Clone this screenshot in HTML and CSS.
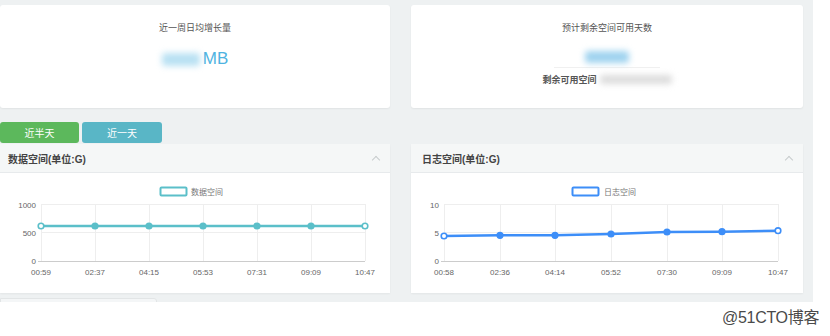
FILE: index.html
```html
<!DOCTYPE html>
<html lang="zh-CN">
  <head>
    <meta charset="UTF-8" />
    <title>空间监控</title>
    <link rel="stylesheet" href="styles.css">
  </head>
  <body>
    <div class="page">
      <div class="stats">
        <div class="stat-card">
          <div class="stat-title">近一周日均增长量</div>
          <div class="stat-value"><span class="blur blur-blue blur-num"></span>MB</div>
        </div>
        <div class="stat-card">
          <div class="stat-title">预计剩余空间可用天数</div>
          <div class="stat-value stat-days"><span class="blur blur-blue blur-days"></span></div>
          <div class="stat-sub">剩余可用空间 <span class="blur blur-gray"></span></div>
        </div>
      </div>

      <div class="tabs">
        <button class="btn btn-green">近半天</button>
        <button class="btn btn-teal">近一天</button>
      </div>

      <div class="panels">
        <div class="panel">
          <div class="panel-head">
            <span>数据空间(单位:G)</span>
            <span class="chevron"></span>
          </div>
          <div class="panel-body">
            <svg width="390" height="120" viewBox="0 0 390 120">
              <rect x="160.5" y="14.5" width="26" height="8" rx="1" fill="#fff" stroke="#5bbfc9" stroke-width="2"/>
              <text x="191" y="22" class="legend">数据空间</text>
              <g stroke="#eeeeee" stroke-width="1">
                <line x1="41" y1="31.5" x2="365" y2="31.5"/>
                <line x1="41" y1="59.5" x2="365" y2="59.5"/>
                <line x1="41.5" y1="31" x2="41.5" y2="88"/>
                <line x1="95.5" y1="31" x2="95.5" y2="88"/>
                <line x1="149.5" y1="31" x2="149.5" y2="88"/>
                <line x1="203.5" y1="31" x2="203.5" y2="88"/>
                <line x1="257.5" y1="31" x2="257.5" y2="88"/>
                <line x1="311.5" y1="31" x2="311.5" y2="88"/>
                <line x1="365.5" y1="31" x2="365.5" y2="88"/>
              </g>
              <line x1="38" y1="88.5" x2="365" y2="88.5" stroke="#cccccc"/>
              <g class="axis" text-anchor="end">
                <text x="36" y="35">1000</text>
                <text x="36" y="63">500</text>
                <text x="36" y="91">0</text>
              </g>
              <g class="axis" text-anchor="middle">
                <text x="41" y="102">00:59</text>
                <text x="95" y="102">02:37</text>
                <text x="149" y="102">04:15</text>
                <text x="203" y="102">05:53</text>
                <text x="257" y="102">07:31</text>
                <text x="311" y="102">09:09</text>
                <text x="365" y="102">10:47</text>
              </g>
              <polyline points="41,53 95,53 149,53 203,53 257,53 311,53 365,53" fill="none" stroke="#5bbfc9" stroke-width="2.4"/>
              <g fill="#5bbfc9" stroke="#5bbfc9" stroke-width="1.6">
                <circle cx="41" cy="53" r="2.8" fill="#fff"/>
                <circle cx="95" cy="53" r="2.8"/>
                <circle cx="149" cy="53" r="2.8"/>
                <circle cx="203" cy="53" r="2.8"/>
                <circle cx="257" cy="53" r="2.8"/>
                <circle cx="311" cy="53" r="2.8"/>
                <circle cx="365" cy="53" r="2.8" fill="#fff"/>
              </g>
            </svg>
          </div>
        </div>

        <div class="panel">
          <div class="panel-head">
            <span>日志空间(单位:G)</span>
            <span class="chevron"></span>
          </div>
          <div class="panel-body">
            <svg width="392" height="120" viewBox="0 0 392 120">
              <rect x="161.5" y="14.5" width="26" height="8" rx="1" fill="#fff" stroke="#3d8ef8" stroke-width="2"/>
              <text x="193" y="22" class="legend">日志空间</text>
              <g stroke="#eeeeee" stroke-width="1">
                <line x1="33" y1="31.5" x2="367" y2="31.5"/>
                <line x1="33" y1="59.5" x2="367" y2="59.5"/>
                <line x1="33.5" y1="31" x2="33.5" y2="88"/>
                <line x1="89.5" y1="31" x2="89.5" y2="88"/>
                <line x1="144.5" y1="31" x2="144.5" y2="88"/>
                <line x1="200.5" y1="31" x2="200.5" y2="88"/>
                <line x1="256.5" y1="31" x2="256.5" y2="88"/>
                <line x1="311.5" y1="31" x2="311.5" y2="88"/>
                <line x1="367.5" y1="31" x2="367.5" y2="88"/>
              </g>
              <line x1="30" y1="88.5" x2="367" y2="88.5" stroke="#cccccc"/>
              <g class="axis" text-anchor="end">
                <text x="28" y="35">10</text>
                <text x="28" y="63">5</text>
                <text x="28" y="91">0</text>
              </g>
              <g class="axis" text-anchor="middle">
                <text x="33" y="102">00:58</text>
                <text x="89" y="102">02:36</text>
                <text x="144" y="102">04:14</text>
                <text x="200" y="102">05:52</text>
                <text x="256" y="102">07:30</text>
                <text x="311" y="102">09:09</text>
                <text x="367" y="102">10:47</text>
              </g>
              <polyline points="33,63 89,62.3 144,62.3 200,61 256,59 311,58.7 367,57.7" fill="none" stroke="#3d8ef8" stroke-width="2.4"/>
              <g fill="#3d8ef8" stroke="#3d8ef8" stroke-width="1.6">
                <circle cx="33" cy="63" r="2.8" fill="#fff"/>
                <circle cx="89" cy="62.3" r="2.8"/>
                <circle cx="144" cy="62.3" r="2.8"/>
                <circle cx="200" cy="61" r="2.8"/>
                <circle cx="256" cy="59" r="2.8"/>
                <circle cx="311" cy="58.7" r="2.8"/>
                <circle cx="367" cy="57.7" r="2.8" fill="#fff"/>
              </g>
            </svg>
          </div>
        </div>
      </div>

      <div class="next-card"></div>
    </div>

    <div class="watermark">@51CTO博客</div>
  </body>
</html>
```

FILE: styles.css
```css
body {
  margin: 0;
  background: #fff;
  font-family: "Liberation Sans", "Noto Sans CJK SC", sans-serif;
  color: #555;
}
.page {
  width: 813px;
  height: 302px;
  box-sizing: border-box;
  padding-top: 5px;
  background: #eef1f2;
  overflow: hidden;
}
.stats,
.panels {
  display: grid;
  grid-template-columns: 390px 392px;
  column-gap: 21px;
}
.stat-card {
  height: 103px;
  background: #fff;
  border-radius: 3px;
  box-shadow: 0 1px 2px rgba(0, 0, 0, 0.06);
  text-align: center;
  box-sizing: border-box;
  padding-top: 17px;
}
.stat-title {
  font-size: 9px;
  line-height: 12px;
  color: #555;
}
.stat-value {
  margin-top: 14px;
  height: 22px;
  font-size: 17px;
  line-height: 22px;
  color: #4fb3e1;
}
.stat-days {
  margin-top: 11px;
  width: 106px;
  margin-left: auto;
  margin-right: auto;
  border-bottom: 1px solid #f0f0f0;
}
.stat-sub {
  margin-top: 5px;
  font-size: 9px;
  font-weight: bold;
  color: #555;
  white-space: nowrap;
  display: flex;
  justify-content: center;
  align-items: center;
  gap: 3px;
}
.blur {
  display: inline-block;
  vertical-align: middle;
  filter: blur(3px);
  border-radius: 3px;
  flex-shrink: 0;
}
.blur-blue {
  background: #b9e1f3;
}
.blur-num {
  width: 38px;
  height: 13px;
  margin-right: 3px;
}
.blur-days {
  width: 44px;
  height: 12px;
  background: #9fd3ef;
}
.blur-gray {
  width: 72px;
  height: 9px;
  background: #dcdcdc;
}
.tabs {
  display: flex;
  gap: 3px;
  margin-top: 14px;
  height: 21px;
}
.btn {
  border: none;
  border-radius: 3px;
  color: #fff;
  font-family: inherit;
  font-size: 10px;
  padding: 0;
  height: 21px;
}
.btn-green {
  width: 79px;
  background: #5cb85c;
}
.btn-teal {
  width: 80px;
  background: #59b6c6;
}
.panels {
  margin-top: 1px;
}
.panel {
  height: 149px;
  background: #fff;
  box-shadow: 0 1px 2px rgba(0, 0, 0, 0.05);
}
.panel-head {
  height: 29px;
  box-sizing: border-box;
  padding: 0 11px 0 8px;
  background: #f5f7f7;
  border-bottom: 1px solid #e7eaec;
  display: flex;
  align-items: center;
  justify-content: space-between;
  font-size: 10px;
  font-weight: bold;
  color: #444;
}
.panel:nth-child(2) .panel-head {
  padding-left: 11px;
}
.chevron {
  width: 5px;
  height: 5px;
  border-left: 1.5px solid #c8cccd;
  border-top: 1.5px solid #c8cccd;
  transform: rotate(45deg);
  margin-top: 4px;
}
.panel-body svg {
  display: block;
}
.legend {
  font-size: 8px;
  fill: #777;
}
.axis {
  font-size: 8px;
  fill: #666;
}
.next-card {
  width: 155px;
  height: 10px;
  margin-top: 5px;
  background: #f4f6f7;
  border: 1px solid #e2e5e6;
  border-radius: 0 3px 0 0;
}
.watermark {
  position: absolute;
  left: 722px;
  top: 304px;
  font-size: 16px;
  color: #4a4a4a;
  letter-spacing: -0.3px;
}
```
